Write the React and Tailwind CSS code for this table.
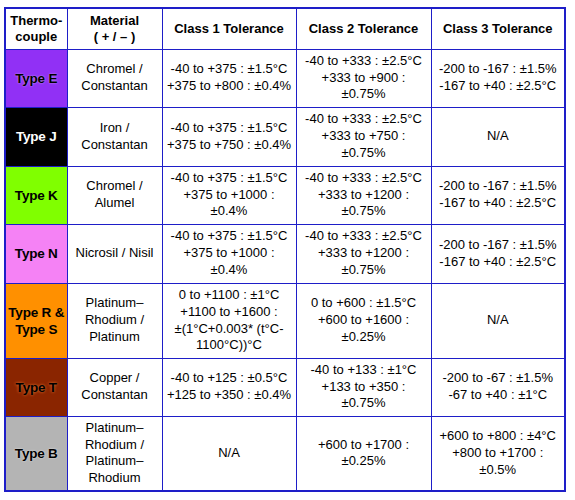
const rows = [
  {
    type: ["Type E"],
    bg: "bg-[#9130f5]",
    text: "text-black [text-shadow:0_0_2px_rgba(255,255,255,0.6)]",
    h: "h-[58px]",
    material: ["Chromel /", "Constantan"],
    c1: ["-40 to +375 : ±1.5°C", "+375 to +800 : ±0.4%"],
    c2: ["-40 to +333 : ±2.5°C", "+333 to +900 :", "±0.75%"],
    c3: ["-200 to -167 : ±1.5%", "-167 to +40 : ±2.5°C"],
  },
  {
    type: ["Type J"],
    bg: "bg-black",
    text: "text-white",
    h: "h-[59px]",
    material: ["Iron /", "Constantan"],
    c1: ["-40 to +375 : ±1.5°C", "+375 to +750 : ±0.4%"],
    c2: ["-40 to +333 : ±2.5°C", "+333 to +750 :", "±0.75%"],
    c3: ["N/A"],
  },
  {
    type: ["Type K"],
    bg: "bg-[#80ff00]",
    text: "text-black",
    h: "h-[58px]",
    material: ["Chromel /", "Alumel"],
    c1: ["-40 to +375 : ±1.5°C", "+375 to +1000 :", "±0.4%"],
    c2: ["-40 to +333 : ±2.5°C", "+333 to +1200 :", "±0.75%"],
    c3: ["-200 to -167 : ±1.5%", "-167 to +40 : ±2.5°C"],
  },
  {
    type: ["Type N"],
    bg: "bg-[#f582f5]",
    text: "text-black",
    h: "h-[59px]",
    material: ["Nicrosil / Nisil"],
    c1: ["-40 to +375 : ±1.5°C", "+375 to +1000 :", "±0.4%"],
    c2: ["-40 to +333 : ±2.5°C", "+333 to +1200 :", "±0.75%"],
    c3: ["-200 to -167 : ±1.5%", "-167 to +40 : ±2.5°C"],
  },
  {
    type: ["Type R &", "Type S"],
    bg: "bg-[#ff9000]",
    text: "text-black",
    h: "h-[75px]",
    material: ["Platinum–", "Rhodium /", "Platinum"],
    c1: ["0 to +1100 : ±1°C", "+1100 to +1600 :", "±(1°C+0.003* (t°C-", "1100°C))°C"],
    c2: ["0 to +600 : ±1.5°C", "+600 to +1600 :", "±0.25%"],
    c3: ["N/A"],
  },
  {
    type: ["Type T"],
    bg: "bg-[#8a2500]",
    text: "text-black [text-shadow:0_0_3px_rgba(255,140,60,0.9)]",
    h: "h-[58px]",
    material: ["Copper /", "Constantan"],
    c1: ["-40 to +125 : ±0.5°C", "+125 to +350 : ±0.4%"],
    c2: ["-40 to +133 : ±1°C", "+133 to +350 :", "±0.75%"],
    c3: ["-200 to -67 : ±1.5%", "-67 to +40 : ±1°C"],
  },
  {
    type: ["Type B"],
    bg: "bg-[#b4b4b4]",
    text: "text-black [text-shadow:0_0_2px_rgba(255,255,255,0.7)]",
    h: "h-[74px]",
    material: ["Platinum–", "Rhodium /", "Platinum–", "Rhodium"],
    c1: ["N/A"],
    c2: ["+600 to +1700 :", "±0.25%"],
    c3: ["+600 to +800 : ±4°C", "+800 to +1700 :", "±0.5%"],
  },
];

function Lines({ lines }) {
  return lines.map((l, i) => (
    <div key={i} className="whitespace-nowrap">
      {l}
    </div>
  ));
}

const cell = "border border-[#1e1ec8] text-center align-middle p-0";

export default function App() {
  return (
    <div className="w-[575px] h-[500px] bg-white pt-[7px] pl-[4px] font-['Liberation_Sans',Arial,sans-serif] text-black">
      <div className="w-[562px] border-2 border-[#1e1ec8]">
        <table className="w-full table-fixed border-collapse border-hidden text-[13px] leading-[16.7px]">
          <colgroup>
            <col className="w-[61px]" />
            <col className="w-[95px]" />
            <col className="w-[134px]" />
            <col className="w-[135px]" />
            <col className="w-[133px]" />
          </colgroup>
          <thead>
            <tr className="h-[40px] font-bold text-[13px] leading-[16px]">
              <th className={cell}>
                Thermo-
                <br />
                couple
              </th>
              <th className={cell}>
                Material
                <br />( + / – )
              </th>
              <th className={cell}>Class 1 Tolerance</th>
              <th className={cell}>Class 2 Tolerance</th>
              <th className={cell}>Class 3 Tolerance</th>
            </tr>
          </thead>
          <tbody>
            {rows.map((r) => (
              <tr key={r.type.join(" ")} className={r.h}>
                <td className={`${cell} ${r.bg}`}>
                  <div className={`font-bold text-[13.5px] leading-[17px] tracking-[-0.2px] ${r.text}`}>
                    <Lines lines={r.type} />
                  </div>
                </td>
                <td className={cell}>
                  <Lines lines={r.material} />
                </td>
                <td className={cell}>
                  <Lines lines={r.c1} />
                </td>
                <td className={cell}>
                  <Lines lines={r.c2} />
                </td>
                <td className={cell}>
                  <Lines lines={r.c3} />
                </td>
              </tr>
            ))}
          </tbody>
        </table>
      </div>
    </div>
  );
}
